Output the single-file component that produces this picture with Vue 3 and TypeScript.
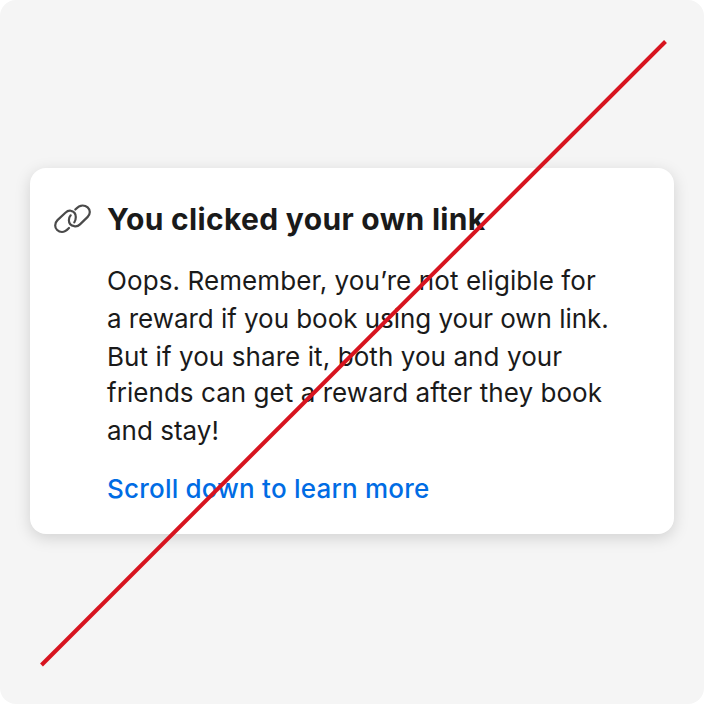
<script setup lang="ts">
interface Line { text: string; spacing: string }
const lines: Line[] = [
  { text: 'Oops. Remember, you’re not eligible for', spacing: '0.09px' },
  { text: 'a reward if you book using your own link.', spacing: '-0.05px' },
  { text: 'But if you share it, both you and your', spacing: '0.08px' },
  { text: 'friends can get a reward after they book', spacing: '0.05px' },
  { text: 'and stay!', spacing: '0' },
]
</script>

<template>
  <main class="stage">
    <section class="card">
      <svg class="icon" viewBox="0 0 40 32" fill="none" stroke="#4a4a4a" stroke-width="2.2" stroke-linecap="round">
        <path d="M15 25C12.8 27.3 10.8 29 8 29C4.2 29 1.2 26 1.2 22.4C1.2 20.3 1.9 18.7 3.5 17.1L11.4 9.7C13.1 8.1 15 7.3 17 7.8C20 8.4 21.8 10.5 21.8 14C21.8 16.2 21.3 18 20.3 19.3" />
        <path d="M21.3 6.5C23.4 4.2 25.5 2.5 28.6 2.5C32.5 2.5 35.8 5.4 35.8 9.1C35.8 11 35.1 12.5 33.7 13.9L26 21.4C24.2 23.1 22.5 23.7 20.3 23.2C17 22.6 14.9 20.2 14.9 17.2C14.9 15.2 15.5 13.6 16.7 12.3" />
      </svg>
      <div class="content">
        <h1>You clicked your own link</h1>
        <p><span v-for="line in lines" :key="line.text" :style="{ letterSpacing: line.spacing }">{{ line.text }}</span></p>
        <a>Scroll down to learn more</a>
      </div>
    </section>
    <svg class="strike" viewBox="0 0 704 704"><path d="M41.5 665L665.5 41.5" stroke="#d7141f" stroke-width="4" /></svg>
  </main>
</template>

<style>
body { margin: 0; background: #fff; }
</style>
<style scoped>
.stage { box-sizing: border-box; position: relative; width: 704px; height: 704px; padding: 168px 30px; background: #f5f5f5; border-radius: 16px; font-family: Inter, sans-serif; color: #1a1a1a; }
.card { box-sizing: border-box; display: flex; height: 366px; padding: 30px 24px; background: #fff; border-radius: 16px; box-shadow: 0 4px 16px rgba(0,0,0,.15); }
.icon { width: 40px; height: 32px; margin-top: 5px; flex: none; }
.content { margin-left: 13px; white-space: nowrap; }
h1 { margin: 0; font-size: 30px; line-height: 42px; font-weight: 700; letter-spacing: .32px; }
p { margin: 22px 0 0; font-size: 26px; line-height: 38px; }
p span { display: block; }
p span:nth-child(4) { margin-top: -2px; }
a { display: block; margin-top: 20px; color: #006ce4; font-size: 26px; line-height: 37px; font-weight: 500; letter-spacing: .21px; }
.strike { position: absolute; inset: 0; width: 704px; height: 704px; }
</style>
